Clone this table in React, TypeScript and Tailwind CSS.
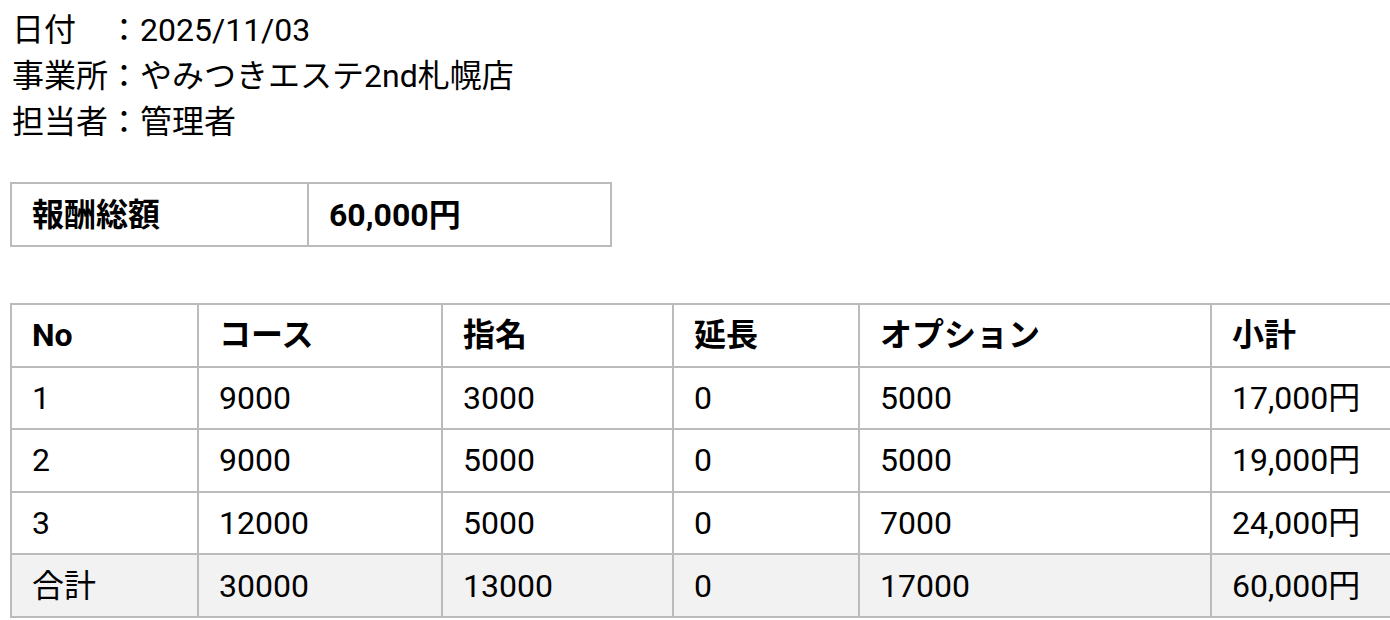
const ROWS = [
  { no: "1", course: "9000", shimei: "3000", encho: "0", option: "5000", subtotal: "17,000円" },
  { no: "2", course: "9000", shimei: "5000", encho: "0", option: "5000", subtotal: "19,000円" },
  { no: "3", course: "12000", shimei: "5000", encho: "0", option: "7000", subtotal: "24,000円" },
];

const TOTAL = { no: "合計", course: "30000", shimei: "13000", encho: "0", option: "17000", subtotal: "60,000円" };

const COLS = [187, 244, 231, 186, 352, 200];

const cell = "border-2 border-[#bbbbbb] px-[20px] text-left align-middle";

export default function App() {
  return (
    <div
      className="w-[1390px] h-[620px] overflow-hidden bg-white text-black"
      style={{ fontFamily: 'Roboto, "Noto Sans CJK JP", sans-serif' }}
    >
      <div className="pl-[12px] pt-[7px] text-[32px] leading-[46px]">
        <div>日付　：2025/11/03</div>
        <div>事業所：やみつきエステ2nd札幌店</div>
        <div>担当者：管理者</div>
      </div>

      <table className="ml-[10px] mt-[37px] border-collapse table-fixed w-[602px] text-[32px]">
        <colgroup>
          <col className="w-[297px]" />
          <col />
        </colgroup>
        <tbody>
          <tr>
            <th className={cell + " h-[63px] font-bold"}>報酬総額</th>
            <td className={cell + " h-[63px] font-bold"}>60,000円</td>
          </tr>
        </tbody>
      </table>

      <table className="ml-[10px] mt-[56px] border-collapse table-fixed w-[1400px] text-[32px]">
        <colgroup>
          {COLS.map((w, i) => (
            <col key={i} style={{ width: w }} />
          ))}
        </colgroup>
        <thead>
          <tr>
            {["No", "コース", "指名", "延長", "オプション", "小計"].map((h) => (
              <th key={h} className={cell + " h-[62.6px] font-bold"}>
                {h}
              </th>
            ))}
          </tr>
        </thead>
        <tbody>
          {ROWS.map((r) => (
            <tr key={r.no}>
              <td className={cell + " h-[62.6px]"}>{r.no}</td>
              <td className={cell + " h-[62.6px]"}>{r.course}</td>
              <td className={cell + " h-[62.6px]"}>{r.shimei}</td>
              <td className={cell + " h-[62.6px]"}>{r.encho}</td>
              <td className={cell + " h-[62.6px]"}>{r.option}</td>
              <td className={cell + " h-[62.6px]"}>{r.subtotal}</td>
            </tr>
          ))}
          <tr className="bg-[#f2f2f2]">
            <td className={cell + " h-[62.6px]"}>{TOTAL.no}</td>
            <td className={cell + " h-[62.6px]"}>{TOTAL.course}</td>
            <td className={cell + " h-[62.6px]"}>{TOTAL.shimei}</td>
            <td className={cell + " h-[62.6px]"}>{TOTAL.encho}</td>
            <td className={cell + " h-[62.6px]"}>{TOTAL.option}</td>
            <td className={cell + " h-[62.6px]"}>{TOTAL.subtotal}</td>
          </tr>
        </tbody>
      </table>
    </div>
  );
}
